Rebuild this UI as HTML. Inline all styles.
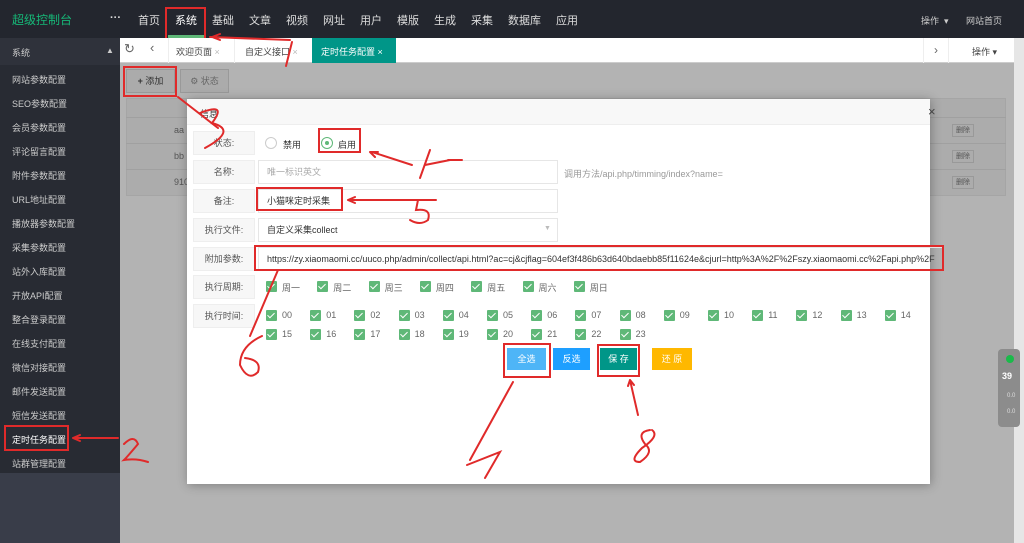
<!DOCTYPE html>
<html><head><meta charset="utf-8"><style>
*{margin:0;padding:0;box-sizing:border-box}
body{width:1024px;height:543px;overflow:hidden;position:relative;background:#b3b3b3;font-family:"Liberation Sans","Noto Sans CJK SC",sans-serif;font-size:9px;color:#333}
.a{position:absolute}
.top{left:0;top:0;width:1024px;height:38px;background:#23262e}
.nav{color:#ddd;font-size:11px;top:12px}
.side{left:0;top:38px;width:120px;height:505px;background:#393d49}
.sideIn{left:0;top:38px;width:120px;height:435px;background:#282b33}
.si{left:12px;color:#ccc;font-size:9px}
.lbl{background:#f7f7f7;border:1px solid #eee;width:62px;height:24px;text-align:center;line-height:22px;color:#555}
.inp{border:1px solid #e6e6e6;height:24px;line-height:22px;padding-left:8px;color:#333}
.cb{width:11px;height:11px;background:#5fb878;border-radius:1px}
.cb:after{content:"";position:absolute;left:3px;top:1px;width:3px;height:6px;border:solid #fff;border-width:0 1.3px 1.3px 0;transform:rotate(45deg)}
.ct{color:#666;font-size:9px}
.btn{top:348px;height:22px;color:#fff;font-size:9px;text-align:center;line-height:22px}
.rb{border:2px solid #e02a2a}
</style></head><body>
<div class="a top"></div>
<div class="a" style="left:12px;top:11px;color:#16b777;font-size:12px">超级控制台</div>
<div class="a nav" style="left:110px;font-weight:bold">···</div>
<div class="a nav" style="left:138px">首页</div>
<div class="a nav" style="left:175px;color:#fff">系统</div>
<div class="a" style="left:168px;top:35px;width:36px;height:3px;background:#5fb878"></div>
<div class="a nav" style="left:212px">基础</div>
<div class="a nav" style="left:249px">文章</div>
<div class="a nav" style="left:286px">视频</div>
<div class="a nav" style="left:323px">网址</div>
<div class="a nav" style="left:360px">用户</div>
<div class="a nav" style="left:397px">模版</div>
<div class="a nav" style="left:434px">生成</div>
<div class="a nav" style="left:471px">采集</div>
<div class="a nav" style="left:508px">数据库</div>
<div class="a nav" style="left:556px">应用</div>
<div class="a" style="left:921px;top:14px;color:#ccc;font-size:9px">操作 &nbsp;▾</div>
<div class="a" style="left:966px;top:14px;color:#ccc;font-size:9px">网站首页</div>
<div class="a rb" style="left:165px;top:7px;width:41px;height:33px"></div>

<div class="a side"></div><div class="a sideIn"></div>
<div class="a" style="left:0;top:38px;width:120px;height:27px;background:#2f323b"></div>
<div class="a si" style="top:46px">系统</div><div class="a" style="left:106px;top:46px;color:#ccc;font-size:8px">▲</div>
<div class="a si" style="top:73px">网站参数配置</div>
<div class="a si" style="top:97px">SEO参数配置</div>
<div class="a si" style="top:121px">会员参数配置</div>
<div class="a si" style="top:145px">评论留言配置</div>
<div class="a si" style="top:169px">附件参数配置</div>
<div class="a si" style="top:193px">URL地址配置</div>
<div class="a si" style="top:217px">播放器参数配置</div>
<div class="a si" style="top:241px">采集参数配置</div>
<div class="a si" style="top:265px">站外入库配置</div>
<div class="a si" style="top:289px">开放API配置</div>
<div class="a si" style="top:313px">整合登录配置</div>
<div class="a si" style="top:337px">在线支付配置</div>
<div class="a si" style="top:361px">微信对接配置</div>
<div class="a si" style="top:385px">邮件发送配置</div>
<div class="a si" style="top:409px">短信发送配置</div>
<div class="a si" style="top:433px;color:#fff">定时任务配置</div>
<div class="a si" style="top:457px">站群管理配置</div>
<div class="a rb" style="left:4px;top:425px;width:65px;height:26px"></div>

<div class="a" style="left:120px;top:38px;width:904px;height:25px;background:#fff;border-bottom:1px solid #ccc"></div>
<div class="a" style="left:124px;top:41px;font-size:13px;color:#666">↻</div>
<div class="a" style="left:150px;top:40px;font-size:13px;color:#666">‹</div>
<div class="a" style="left:168px;top:38px;width:67px;height:25px;border-left:1px solid #eee;border-right:1px solid #eee"></div>
<div class="a" style="left:176px;top:45px;color:#444">欢迎页面 <span style="color:#bbb">×</span></div>
<div class="a" style="left:245px;top:45px;color:#444">自定义接口 <span style="color:#bbb">×</span></div>
<div class="a" style="left:312px;top:38px;width:84px;height:25px;background:#009688"></div>
<div class="a" style="left:321px;top:45px;color:#fff">定时任务配置 <span>×</span></div>
<div class="a" style="left:923px;top:38px;width:26px;height:25px;border-left:1px solid #eee;border-right:1px solid #eee;text-align:center;line-height:24px;color:#666;font-size:12px">›</div>
<div class="a" style="left:972px;top:45px;color:#444">操作 ▾</div>
<div class="a" style="left:1014px;top:38px;width:10px;height:505px;background:#e6e6e6"></div>

<div class="a" style="left:126px;top:69px;width:49px;height:24px;border:1px solid #999;background:#ababab;text-align:center;line-height:22px;color:#333"><b>+</b> 添加</div>
<div class="a" style="left:180px;top:69px;width:49px;height:24px;border:1px solid #999;background:#ababab;text-align:center;line-height:22px;color:#666">⚙ 状态</div>
<div class="a rb" style="left:123px;top:66px;width:54px;height:31px"></div>
<div class="a" style="left:126px;top:98px;width:880px;height:98px;border:1px solid #a5a5a5;background:#acacac"></div>
<div class="a" style="left:126px;top:117px;width:880px;height:1px;background:#a0a0a0"></div>
<div class="a" style="left:126px;top:143px;width:880px;height:1px;background:#a0a0a0"></div>
<div class="a" style="left:126px;top:169px;width:880px;height:1px;background:#a0a0a0"></div>
<div class="a" style="left:174px;top:125px;color:#555">aa</div>
<div class="a" style="left:174px;top:151px;color:#555">bb</div>
<div class="a" style="left:174px;top:177px;color:#555">910</div>
<div class="a" style="left:952px;top:124px;width:22px;height:13px;border:1px solid #999;color:#555;font-size:7px;text-align:center">删除</div>
<div class="a" style="left:952px;top:150px;width:22px;height:13px;border:1px solid #999;color:#555;font-size:7px;text-align:center">删除</div>
<div class="a" style="left:952px;top:176px;width:22px;height:13px;border:1px solid #999;color:#555;font-size:7px;text-align:center">删除</div>

<div class="a" style="left:187px;top:99px;width:743px;height:385px;background:#fff;box-shadow:1px 1px 10px rgba(0,0,0,.3)"></div>
<div class="a" style="left:187px;top:99px;width:743px;height:26px;background:#f8f8f8;border-bottom:1px solid #eee"></div>
<div class="a" style="left:200px;top:107px;color:#333">信息</div>
<div class="a" style="left:928px;top:104px;font-size:13px;color:#444">×</div>

<div class="a lbl" style="left:193px;top:131px">状态:</div>
<div class="a" style="left:265px;top:137px;width:12px;height:12px;border:1px solid #ccc;border-radius:50%"></div>
<div class="a" style="left:283px;top:138px">禁用</div>
<div class="a" style="left:321px;top:137px;width:12px;height:12px;border:1px solid #5fb878;border-radius:50%"></div>
<div class="a" style="left:325px;top:141px;width:4px;height:4px;background:#5fb878;border-radius:50%"></div>
<div class="a" style="left:338px;top:138px">启用</div>
<div class="a rb" style="left:318px;top:128px;width:43px;height:25px"></div>

<div class="a lbl" style="left:193px;top:160px">名称:</div>
<div class="a inp" style="left:258px;top:160px;width:300px;color:#aaa">唯一标识英文</div>
<div class="a" style="left:564px;top:167px;color:#999">调用方法/api.php/timming/index?name=</div>
<div class="a lbl" style="left:193px;top:189px">备注:</div>
<div class="a inp" style="left:258px;top:189px;width:300px">小猫咪定时采集</div>
<div class="a rb" style="left:256px;top:187px;width:87px;height:24px"></div>
<div class="a lbl" style="left:193px;top:218px">执行文件:</div>
<div class="a inp" style="left:258px;top:218px;width:300px">自定义采集collect</div>
<div class="a" style="left:544px;top:225px;color:#bbb;font-size:7px">▼</div>
<div class="a lbl" style="left:193px;top:247px">附加参数:</div>
<div class="a inp" style="left:258px;top:247px;width:686px;overflow:hidden;white-space:nowrap;font-size:9px">https://zy.xiaomaomi.cc/uuco.php/admin/collect/api.html?ac=cj&amp;cjflag=604ef3f486b63d640bdaebb85f11624e&amp;cjurl=http%3A%2F%2Fszy.xiaomaomi.cc%2Fapi.php%2F</div>
<div class="a rb" style="left:254px;top:245px;width:690px;height:26px"></div>
<div class="a lbl" style="left:193px;top:275px">执行周期:</div>
<div class="a lbl" style="left:193px;top:304px">执行时间:</div>
<div id="g"></div>

<div class="a btn" style="left:507px;width:39px;background:#4eb5f7">全选</div>
<div class="a btn" style="left:553px;width:37px;background:#1e9fff">反选</div>
<div class="a btn" style="left:600px;width:37px;background:#009688">保 存</div>
<div class="a btn" style="left:652px;width:40px;background:#ffb800">还 原</div>
<div class="a rb" style="left:503px;top:343px;width:48px;height:35px"></div>
<div class="a rb" style="left:597px;top:344px;width:43px;height:33px"></div>

<div class="a" style="left:998px;top:349px;width:22px;height:78px;background:#8c8c8c;border-radius:4px"></div>
<div class="a" style="left:1006px;top:355px;width:8px;height:8px;background:#1aba4a;border-radius:50%"></div>
<div class="a" style="left:1002px;top:371px;color:#fff;font-size:9px;font-weight:bold">39</div>
<div class="a" style="left:1007px;top:393px;color:#ddd;font-size:6px">0.0</div>
<div class="a" style="left:1007px;top:409px;color:#ddd;font-size:6px">0.0</div>

<svg class="a" style="left:0;top:0" width="1024" height="543" fill="none" stroke="#e02a2a" stroke-width="2" stroke-linecap="round">
<path d="M290 40 L210 37 M212 37 l8 -3 M212 37 l8 3"/>
<path d="M292 42 L286 66"/>
<path d="M178 97 L218 128"/>
<path d="M200 113 Q228 102 212 123 Q238 130 205 148"/>
<path d="M412 165 L372 152 M370 152 l8 0 M370 152 l5 5"/>
<path d="M425 165 L450 160 M430 150 L420 178 M448 160 L462 160"/>
<path d="M418 200 L350 200 M348 200 l7 -3 M348 200 l7 3"/>
<path d="M436 200 L418 200 L416 210 Q432 208 428 220 Q420 226 410 220"/>
<path d="M278 270 L250 336"/>
<path d="M262 336 Q240 346 240 365 Q248 382 258 372 Q262 360 245 358"/>
<path d="M513 382 L470 460 M467 465 L500 452 L485 478"/>
<path d="M630 380 L638 415 M630 380 l-2 6 M630 380 l4 5"/>
<path d="M650 430 Q636 432 645 444 Q655 452 640 462 Q628 462 642 448 Q660 436 652 430"/>
<path d="M118 438 L75 438 M73 438 l7 -3 M73 438 l7 3"/>
<path d="M124 444 Q134 434 138 444 Q128 456 124 460 Q136 458 148 462"/>
</svg>
<script>
var g=document.getElementById('g'),h='';
var w=['周一','周二','周三','周四','周五','周六','周日'];
for(var i=0;i<7;i++){var x=266+i*51.3;h+='<div class="a cb" style="left:'+x+'px;top:281px"></div><div class="a ct" style="left:'+(x+16)+'px;top:281px">'+w[i]+'</div>';}
for(var i=0;i<24;i++){var c=i<15?i:i-15,y=i<15?310:329,x=266+c*44.2;h+='<div class="a cb" style="left:'+x+'px;top:'+y+'px"></div><div class="a ct" style="left:'+(x+16)+'px;top:'+y+'px">'+(i<10?'0'+i:i)+'</div>';}
g.innerHTML=h;
</script>
</body></html>
